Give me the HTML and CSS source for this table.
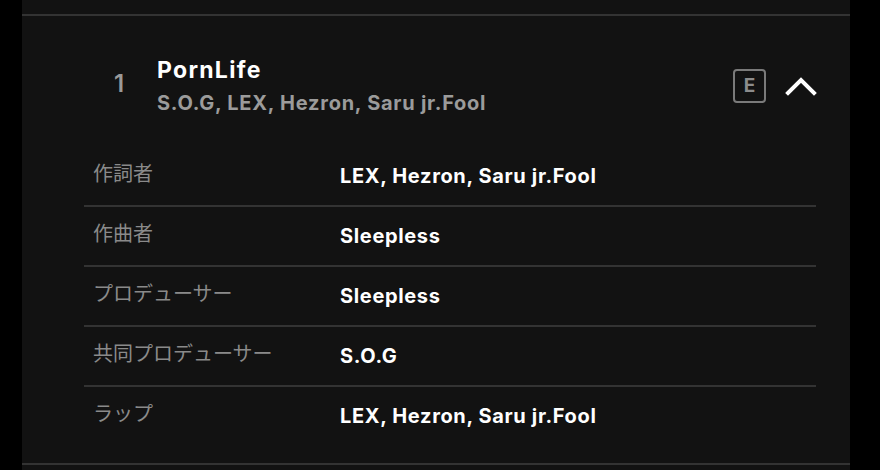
FILE: index.html
```html
<!DOCTYPE html>
<html lang="ja">
<head>
<meta charset="utf-8">
<link rel="stylesheet" href="styles.css">
</head>
<body>
<div class="panel">
  <div class="track">
    <div class="track-head">
      <div class="num">1</div>
      <div class="titles">
        <div class="title">PornLife</div>
        <div class="artists">S.O.G, LEX, Hezron, Saru jr.Fool</div>
      </div>
      <div class="actions">
        <span class="explicit">E</span>
        <svg class="chevron" width="32" height="20" viewBox="0 0 32 20"><path d="M3 17 L16 4 L29 17" fill="none" stroke="#fff" stroke-width="4" stroke-linecap="square" stroke-linejoin="miter"/></svg>
      </div>
    </div>
    <div class="credits">
      <div class="row"><div class="label">作詞者</div><div class="value">LEX, Hezron, Saru jr.Fool</div></div>
      <div class="row"><div class="label">作曲者</div><div class="value">Sleepless</div></div>
      <div class="row"><div class="label">プロデューサー</div><div class="value">Sleepless</div></div>
      <div class="row"><div class="label">共同プロデューサー</div><div class="value">S.O.G</div></div>
      <div class="row"><div class="label">ラップ</div><div class="value">LEX, Hezron, Saru jr.Fool</div></div>
    </div>
  </div>
</div>
</body>
</html>
```
FILE: styles.css
```css
* { box-sizing: border-box; }
html, body { margin: 0; padding: 0; background: #000; }
body {
  width: 880px;
  height: 470px;
  overflow: hidden;
  font-family: Inter, "Noto Sans CJK JP", sans-serif;
  color: #fff;
}
.panel {
  margin-left: 22px;
  width: 828px;
  height: 470px;
  background: #121212;
  padding-top: 14px;
}
.track {
  border-top: 2px solid #333;
  border-bottom: 2px solid #333;
  padding: 0 34px 16px 62px;
}
.track-head {
  display: flex;
  align-items: center;
  height: 131px;
  padding-top: 8px;
}
.num {
  width: 73px;
  padding-left: 30px;
  padding-bottom: 4px;
  font-size: 24px;
  font-weight: 600;
  color: #9a9a9a;
}
.titles {
  flex: 1;
  display: flex;
  flex-direction: column;
  gap: 6px;
}
.title {
  font-size: 23px;
  font-weight: 700;
  line-height: 28px;
  letter-spacing: 1.3px;
}
.artists {
  font-size: 20px;
  font-weight: 700;
  line-height: 26px;
  letter-spacing: 0.75px;
  color: #9b9b9b;
}
.actions {
  display: flex;
  align-items: center;
  gap: 19px;
}
.explicit {
  width: 33px;
  height: 34px;
  border: 2px solid #7a7a7a;
  border-radius: 4px;
  display: flex;
  align-items: center;
  justify-content: center;
  font-size: 19px;
  font-weight: 700;
  color: #8c8c8c;
}
.chevron { display: block; margin-right: -1px; }
.row {
  display: grid;
  grid-template-columns: 256px 1fr;
  height: 60px;
  border-bottom: 2px solid #333;
  padding-top: 15px;
}
.row:last-child { border-bottom: none; }
.label {
  padding-left: 9px;
  margin-top: -1px;
  font-size: 20px;
  line-height: 26px;
  color: #8a8a8a;
}
.value {
  margin-top: 1px;
  font-size: 20px;
  font-weight: 700;
  line-height: 26px;
  letter-spacing: 0.65px;
  color: #fff;
}
```
